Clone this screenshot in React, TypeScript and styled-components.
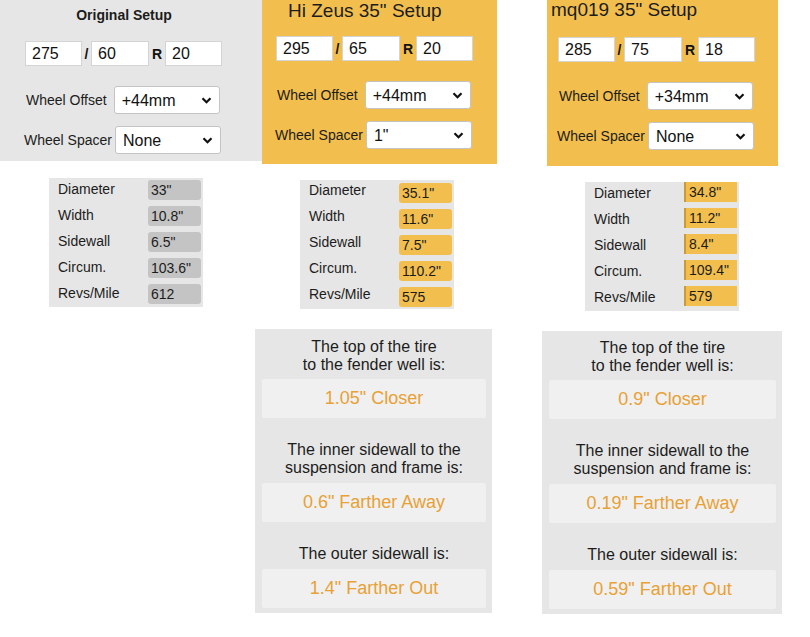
import styled, { createGlobalStyle } from 'styled-components'

const GlobalStyle = createGlobalStyle`
  * { box-sizing: border-box; }
  body {
    margin: 0;
    background: #fff;
    font-family: 'Liberation Sans', Arial, sans-serif;
    color: #1c1c1c;
  }
`

const YELLOW = '#f2bf4e'
const GRAY = '#e6e6e6'

type Stat = { label: string; value: string }

type Setup = {
  title: string
  bold?: boolean
  tire: [string, string, string]
  offset: string
  spacer: string
  stats: Stat[]
}

const setups: Setup[] = [
  {
    title: 'Original Setup',
    bold: true,
    tire: ['275', '60', '20'],
    offset: '+44mm',
    spacer: 'None',
    stats: [
      { label: 'Diameter', value: '33"' },
      { label: 'Width', value: '10.8"' },
      { label: 'Sidewall', value: '6.5"' },
      { label: 'Circum.', value: '103.6"' },
      { label: 'Revs/Mile', value: '612' },
    ],
  },
  {
    title: 'Hi Zeus 35" Setup',
    tire: ['295', '65', '20'],
    offset: '+44mm',
    spacer: '1"',
    stats: [
      { label: 'Diameter', value: '35.1"' },
      { label: 'Width', value: '11.6"' },
      { label: 'Sidewall', value: '7.5"' },
      { label: 'Circum.', value: '110.2"' },
      { label: 'Revs/Mile', value: '575' },
    ],
  },
  {
    title: 'mq019 35" Setup',
    tire: ['285', '75', '18'],
    offset: '+34mm',
    spacer: 'None',
    stats: [
      { label: 'Diameter', value: '34.8"' },
      { label: 'Width', value: '11.2"' },
      { label: 'Sidewall', value: '8.4"' },
      { label: 'Circum.', value: '109.4"' },
      { label: 'Revs/Mile', value: '579' },
    ],
  },
]

const comparisons = [
  { fender: '1.05" Closer', inner: '0.6" Farther Away', outer: '1.4" Farther Out' },
  { fender: '0.9" Closer', inner: '0.19" Farther Away', outer: '0.59" Farther Out' },
]

// per-column placement, measured from the screenshot
const layout = [
  { col: 262, panelX: 0, panelW: 262, panelH: 161, padX: 25, titleH: 30, titleLine: 30, titleX: 0, tireTop: 11, statsX: 49, statsTop: 17, statsPad: 2, labelShift: -1 },
  { col: 280, panelX: 0, panelW: 235, panelH: 164, padX: 14, titleH: 22, titleLine: 22, titleX: 12, tireTop: 14, statsX: 38, statsTop: 16, statsPad: 3, labelShift: -3, resultX: -7, resultW: 237, resultTop: 20, resultPad: 9 },
  { col: 268, panelX: 5, panelW: 231, panelH: 166, padX: 11, titleH: 18, titleLine: 19, titleX: -7, tireTop: 19, statsX: 43, statsTop: 16, statsPad: 0, labelShift: 1, resultX: 0, resultW: 240, resultTop: 20, resultPad: 8 },
]

const Chevron = () => (
  <svg width="11" height="7" viewBox="0 0 11 7">
    <path d="M1.5 1.2 L5.5 5.2 L9.5 1.2" fill="none" stroke="#111" strokeWidth="2.2" />
  </svg>
)

const App = () => (
  <>
    <GlobalStyle />
    <Page>
      {setups.map((s, i) => {
        const l = layout[i]
        const cmp = i > 0 ? comparisons[i - 1] : null
        return (
          <Column key={s.title} $w={l.col}>
            <SetupPanel $x={l.panelX} $w={l.panelW} $h={l.panelH} $pad={l.padX} $yellow={i > 0}>
              <Title $h={l.titleH} $line={l.titleLine} $x={l.titleX} $bold={!!s.bold}>
                {s.title}
              </Title>
              <TireRow $top={l.tireTop}>
                <TireInput defaultValue={s.tire[0]} $w={57} />
                <Sep $w={9}>/</Sep>
                <TireInput defaultValue={s.tire[1]} $w={58} />
                <Sep $w={16}>R</Sep>
                <TireInput defaultValue={s.tire[2]} $w={57} />
              </TireRow>
              <FieldRow $top={20} $shift={1} $gap={7}>
                <FieldLabel>Wheel Offset</FieldLabel>
                <SelectWrap>
                  <Select defaultValue={s.offset}>
                    <option>{s.offset}</option>
                  </Select>
                  <ChevronSlot>
                    <Chevron />
                  </ChevronSlot>
                </SelectWrap>
              </FieldRow>
              <FieldRow $top={12} $shift={-1} $gap={3}>
                <FieldLabel>Wheel Spacer</FieldLabel>
                <SelectWrap>
                  <Select defaultValue={s.spacer}>
                    <option>{s.spacer}</option>
                  </Select>
                  <ChevronSlot>
                    <Chevron />
                  </ChevronSlot>
                </SelectWrap>
              </FieldRow>
            </SetupPanel>

            <StatsTable $x={l.statsX} $top={l.statsTop} $pad={l.statsPad}>
              {s.stats.map(st => (
                <StatRow key={st.label}>
                  <StatLabel $shift={l.labelShift}>{st.label}</StatLabel>
                  <StatValue $yellow={i > 0} $square={i === 2}>
                    {st.value}
                  </StatValue>
                </StatRow>
              ))}
            </StatsTable>

            {cmp && (
              <ResultPanel $x={l.resultX ?? 0} $w={l.resultW ?? 240} $top={l.resultTop ?? 20} $pad={l.resultPad ?? 9}>
                <Question $first>
                  The top of the tire
                  <br />
                  to the fender well is:
                </Question>
                <Answer>{cmp.fender}</Answer>
                <Question>
                  The inner sidewall to the
                  <br />
                  suspension and frame is:
                </Question>
                <Answer>{cmp.inner}</Answer>
                <Question>The outer sidewall is:</Question>
                <Answer>{cmp.outer}</Answer>
              </ResultPanel>
            )}
          </Column>
        )
      })}
    </Page>
  </>
)

export default App

const Page = styled.div`
  display: flex;
  align-items: flex-start;
  width: 810px;
`

const Column = styled.div<{ $w: number }>`
  display: flex;
  flex-direction: column;
  align-items: flex-start;
  width: ${p => p.$w}px;
  flex-shrink: 0;
`

const SetupPanel = styled.section<{ $x: number; $w: number; $h: number; $pad: number; $yellow: boolean }>`
  margin-left: ${p => p.$x}px;
  width: ${p => p.$w}px;
  height: ${p => p.$h}px;
  padding-left: ${p => p.$pad}px;
  background: ${p => (p.$yellow ? YELLOW : GRAY)};
  display: flex;
  flex-direction: column;
`

const Title = styled.h2<{ $h: number; $line: number; $x: number; $bold: boolean }>`
  margin: 0 0 0 ${p => p.$x}px;
  height: ${p => p.$h}px;
  line-height: ${p => p.$line}px;
  font-size: ${p => (p.$bold ? '14px' : '19px')};
  font-weight: ${p => (p.$bold ? 700 : 400)};
  color: #1c1c1c;
  white-space: nowrap;
  ${p => p.$bold && 'text-align: center; width: 198px;'}
`

const TireRow = styled.div<{ $top: number }>`
  display: flex;
  align-items: center;
  margin-top: ${p => p.$top}px;
  height: 25px;
`

const TireInput = styled.input<{ $w: number }>`
  width: ${p => p.$w}px;
  height: 25px;
  border: 1px solid #d4d4d4;
  background: #fff;
  padding: 0 0 0 6px;
  font-family: 'Liberation Sans', Arial, sans-serif;
  font-size: 16px;
  color: #111;
  outline: none;
`

const Sep = styled.span<{ $w: number }>`
  width: ${p => p.$w}px;
  text-align: center;
  font-size: 14px;
  font-weight: 700;
  color: #111;
`

const FieldRow = styled.div<{ $top: number; $shift: number; $gap: number }>`
  display: flex;
  align-items: center;
  gap: ${p => p.$gap}px;
  margin-top: ${p => p.$top}px;
  margin-left: ${p => p.$shift}px;
  height: 28px;
`

const FieldLabel = styled.span`
  font-size: 14px;
  color: #1c1c1c;
  white-space: nowrap;
`

const SelectWrap = styled.div`
  position: relative;
  width: 106px;
  height: 28px;
`

const Select = styled.select`
  appearance: none;
  width: 100%;
  height: 100%;
  border: 1px solid #c4c4c4;
  border-radius: 3px;
  background: #fff;
  padding: 0 0 0 7px;
  font-family: 'Liberation Sans', Arial, sans-serif;
  font-size: 16px;
  color: #111;
  outline: none;
`

const ChevronSlot = styled.span`
  position: absolute;
  right: 8px;
  top: 11px;
  display: flex;
  pointer-events: none;
`

const StatsTable = styled.div<{ $x: number; $top: number; $pad: number }>`
  margin-left: ${p => p.$x}px;
  margin-top: ${p => p.$top}px;
  width: 154px;
  height: 129px;
  padding: ${p => p.$pad}px 2px 0 9px;
  background: ${GRAY};
  display: flex;
  flex-direction: column;
`

const StatRow = styled.div`
  display: flex;
  align-items: flex-start;
  justify-content: space-between;
  height: 26px;
  flex-shrink: 0;
`

const StatLabel = styled.span<{ $shift: number }>`
  font-size: 14px;
  line-height: 20px;
  color: #1c1c1c;
  margin-top: ${p => p.$shift}px;
`

const StatValue = styled.span<{ $yellow: boolean; $square: boolean }>`
  width: 53px;
  height: 20px;
  line-height: 21px;
  padding-left: 3px;
  font-size: 14px;
  color: #1c1c1c;
  background: ${p => (p.$yellow ? YELLOW : '#c4c4c4')};
  border-radius: ${p => (p.$square ? '0' : '3px')};
  border-left: ${p => (p.$square ? '2px solid #c99a35' : 'none')};
`

const ResultPanel = styled.section<{ $x: number; $w: number; $top: number; $pad: number }>`
  margin-left: ${p => p.$x}px;
  margin-top: ${p => p.$top}px;
  width: ${p => p.$w}px;
  padding: ${p => p.$pad}px 6px 5px 7px;
  background: ${GRAY};
  display: flex;
  flex-direction: column;
`

const Question = styled.p<{ $first?: boolean }>`
  margin: ${p => (p.$first ? '0 0 5px' : '23px 0 6px')};
  font-size: 16px;
  line-height: 18px;
  text-align: center;
  color: #1c1c1c;
`

const Answer = styled.div`
  height: 39px;
  line-height: 39px;
  background: #f0f0f0;
  border-radius: 2px;
  text-align: center;
  font-size: 18px;
  color: #e8a135;
`
